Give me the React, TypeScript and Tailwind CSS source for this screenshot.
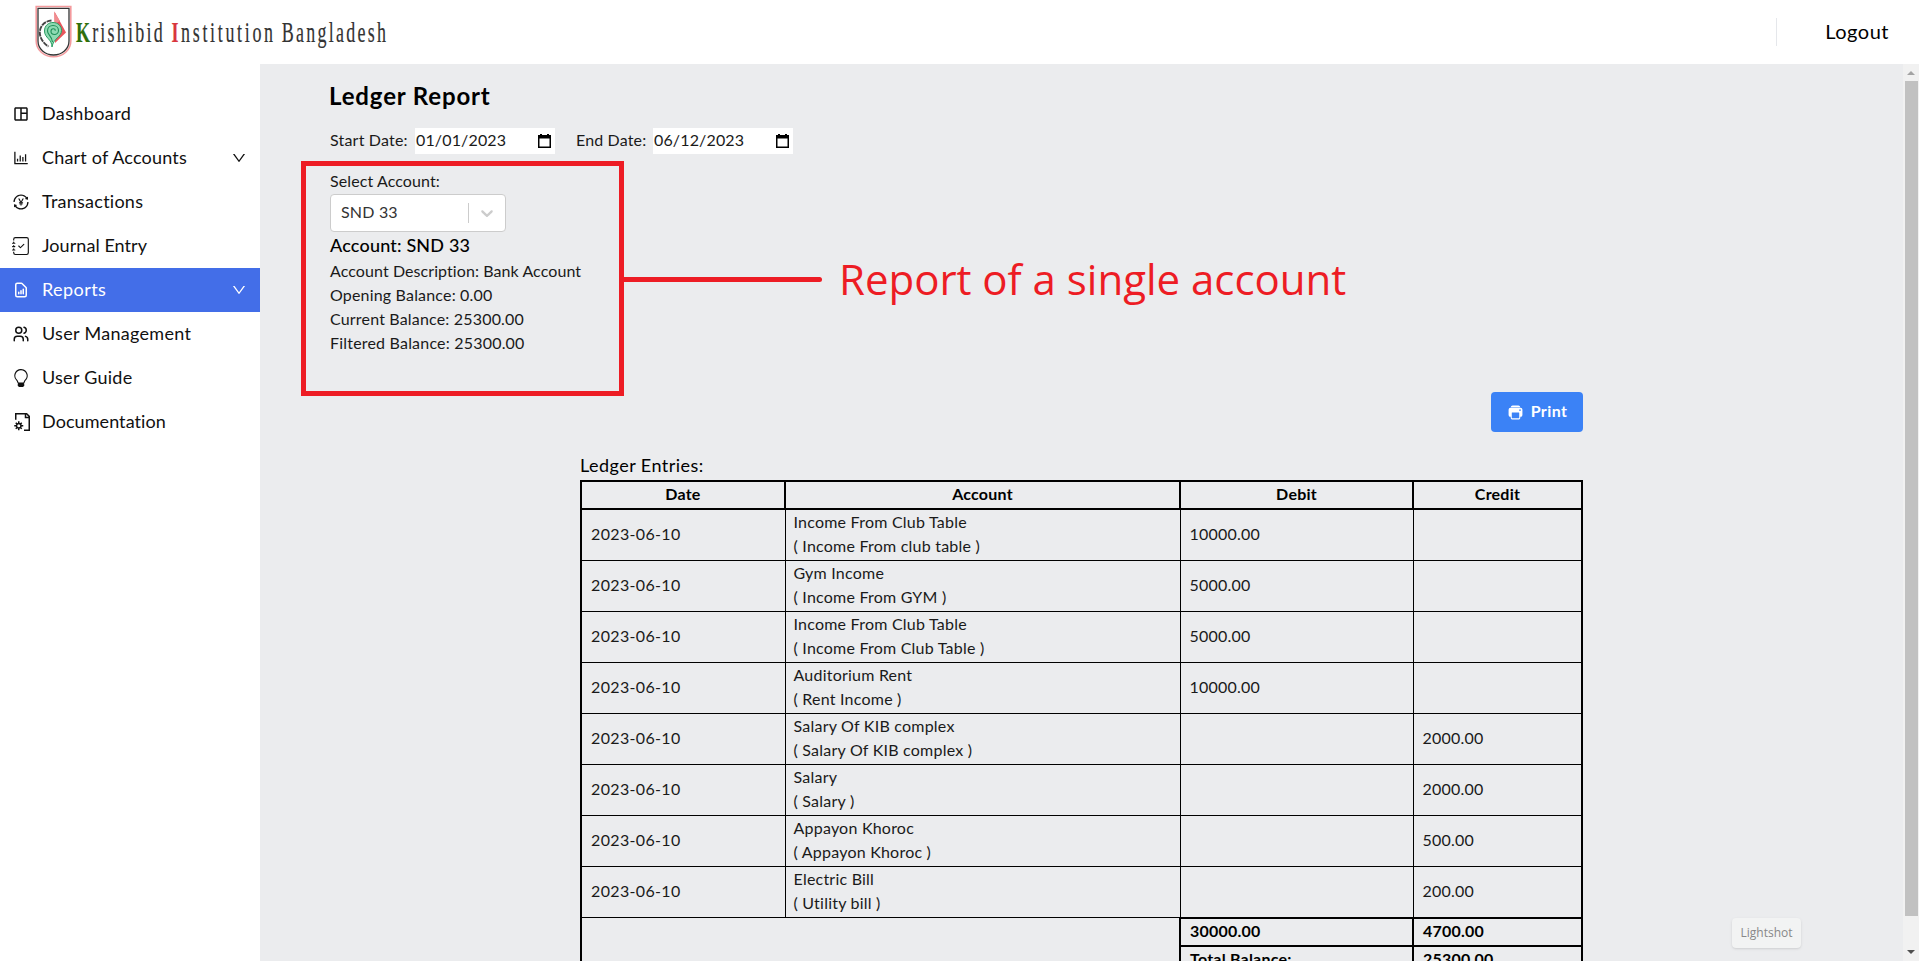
import { AiOutlineBarChart, AiOutlineDown, AiOutlineTransaction } from "react-icons/ai";
import { BsJournalCheck, BsLightbulb } from "react-icons/bs";
import { GrDocumentConfig } from "react-icons/gr";
import { HiOutlineDocumentReport } from "react-icons/hi";
import { IoPrint } from "react-icons/io5";
import { MdOutlineSpaceDashboard } from "react-icons/md";
import { TbUsers } from "react-icons/tb";

const navItems = [
  { label: "Dashboard", icon: MdOutlineSpaceDashboard, tracking: "tracking-[0.38px]" },
  { label: "Chart of Accounts", icon: AiOutlineBarChart, tracking: "tracking-[0.18px]", expandable: true },
  { label: "Transactions", icon: AiOutlineTransaction, tracking: "tracking-[0.25px]" },
  { label: "Journal Entry", icon: BsJournalCheck, tracking: "tracking-[0.06px]" },
  { label: "Reports", icon: HiOutlineDocumentReport, tracking: "tracking-[0.42px]", expandable: true, active: true },
  { label: "User Management", icon: TbUsers, tracking: "tracking-[0.3px]" },
  { label: "User Guide", icon: BsLightbulb, tracking: "tracking-[0.26px]" },
  { label: "Documentation", icon: GrDocumentConfig, tracking: "tracking-[0.07px]" },
];

const entries = [
  { name: "Income From Club Table", note: "Income From club table", debit: "10000.00", credit: "" },
  { name: "Gym Income", note: "Income From GYM", debit: "5000.00", credit: "" },
  { name: "Income From Club Table", note: "Income From Club Table", debit: "5000.00", credit: "" },
  { name: "Auditorium Rent", note: "Rent Income", debit: "10000.00", credit: "" },
  { name: "Salary Of KIB complex", note: "Salary Of KIB complex", debit: "", credit: "2000.00" },
  { name: "Salary", note: "Salary", debit: "", credit: "2000.00" },
  { name: "Appayon Khoroc", note: "Appayon Khoroc", debit: "", credit: "500.00" },
  { name: "Electric Bill", note: "Utility bill", debit: "", credit: "200.00" },
];

function Logo() {
  return (
    <svg width="356" height="56" viewBox="0 0 356 56" className="block">
      <path d="M1.2 2.5H35.8V37C35.8 46 28 52.8 18.5 52.8S1.2 46 1.2 37Z" fill="#fff" stroke="#f49a9d" strokeWidth="1.6" />
      <path d="M3 4.3H34V37C34 45 27 51 18.5 51S3 45 3 37Z" fill="#fff" stroke="#333" strokeWidth="1.3" />
      <path d="M19.5 7.5L31 28.5L20 39Z" fill="#e8555c" />
      <path d="M19 7.5L25 17L19.5 20Z" fill="#f08d90" />
      <path d="M17 43C17 35 9.5 34 9.5 27C9.5 21.5 13.5 18.5 18 18.5C23 18.5 26.5 22 26.5 26.5C26.5 33 18.5 34 17 43Z" fill="#8fdab2" stroke="#2a9d63" strokeWidth="1" />
      <path d="M17.5 38C17 32 12.5 31 12.5 27C12.5 23.5 15 21.5 18 21.5C21.5 21.5 23.5 24 23.5 26.5C23.5 29 21.5 30.5 19.5 30.5C17.5 30.5 16 29 16 27.3C16 25.8 17 24.8 18.3 24.8C19.5 24.8 20.3 25.7 20.3 26.7" fill="none" stroke="#1f8f58" strokeWidth="1.1" />
      <path d="M16.5 16.5C9 17 4.8 23 4.8 28.5C4.8 34 8.500 39.500 13.500 42.500" fill="none" stroke="#444" strokeWidth="1.9" strokeDasharray="5 0.8" />
      <g fontFamily="'Liberation Serif', serif" fontSize="29" fill="#333" stroke="#333" strokeWidth="0.2" transform="scale(0.62 1)">
        <text x="66" y="38" textLength="140">
          <tspan fill="#2f6f0a" stroke="#2f6f0a" fontWeight="700">K</tspan>rishibid
        </text>
        <text x="220" y="38" textLength="164">
          <tspan fill="#d9363e" stroke="#d9363e" fontWeight="700">I</tspan>nstitution
        </text>
        <text x="398" y="38" textLength="168">Bangladesh</text>
      </g>
    </svg>
  );
}

function CalendarIcon() {
  return (
    <svg width="13" height="14" viewBox="0 0 13 14" className="block">
      <path d="M2 0H4V1H9V0H11V1H13V14H0V1H2ZM1.5 4.5V12.5H11.5V4.5Z" fill="#000" fillRule="evenodd" />
    </svg>
  );
}

function DateField({ label, value, labelClass }: { label: string; value: string; labelClass: string }) {
  return (
    <label className="flex items-center">
      <span className={labelClass}>{label}</span>
      <span className="ml-2 flex h-[26px] w-[140px] items-center justify-between bg-white pl-[1px] pr-1">
        <span className="pb-[2px] tracking-[0.15px]">{value}</span>
        <CalendarIcon />
      </span>
    </label>
  );
}

const cell = "border border-black px-2 pt-0 pb-[2px]";
const amountCell = "border border-black pl-[9px] pr-2 pt-0 pb-[2px]";
const totalCell = "border-2 border-black pl-[9px] pr-2 pt-0 pb-[1px]";

export default function App() {
  return (
    <div className="relative flex h-[961px] w-[1919px] flex-col overflow-hidden bg-white font-['Lato',sans-serif] text-black">
      <header className="flex h-16 shrink-0 items-center justify-between pl-[35px] pr-[30px]">
        <Logo />
        <div className="flex items-center">
          <div className="h-7 w-px bg-gray-200" />
          <span className="ml-12 pb-[3px] text-xl tracking-[0.5px]">Logout</span>
        </div>
      </header>

      <div className="flex min-h-0 flex-1">
        <nav className="w-[260px] shrink-0 pt-7">
          {navItems.map(({ label, icon: Icon, tracking, expandable, active }) => (
            <div key={label} className={active ? "flex h-11 items-center bg-[#436ee8] pl-3 pr-[13px] text-white" : "flex h-11 items-center pl-3 pr-[13px] text-[#111]"}>
              <Icon size={18} />
              <span className={`ml-3 flex-1 pb-[2px] text-lg ${tracking}`}>{label}</span>
              {expandable && <AiOutlineDown size={16} />}
            </div>
          ))}
        </nav>

        <main className="flex-1 bg-[#ebecee] pl-[70px] pt-4 text-[#1a1a1a]">
          <h1 className="-ml-px text-2xl leading-8 font-bold tracking-[0.85px] text-black">Ledger Report</h1>
          <div className="mt-4 flex gap-[21px]">
            <DateField label="Start Date:" value="01/01/2023" labelClass="w-[77px] whitespace-nowrap pb-[2px] tracking-[0.2px]" />
            <DateField label="End Date:" value="06/12/2023" labelClass="w-[69px] whitespace-nowrap pb-[2px] tracking-[0.15px]" />
          </div>
          <div className="mt-[15px] leading-6 tracking-[0.18px]">
            <p className="mb-px tracking-[0.1px]">Select Account:</p>
            <div className="flex h-[38px] w-44 items-center rounded border border-[#ccc] bg-white">
              <span className="flex-1 pb-[2px] pl-[10px] text-[#333]">SND 33</span>
              <span className="h-5 w-px bg-[#ccc]" />
              <svg width="20" height="20" viewBox="0 0 20 20" fill="#ccc" className="mx-2">
                <path d="M4.516 7.548c0.436-0.446 1.043-0.481 1.576 0l3.908 3.747 3.908-3.747c0.533-0.481 1.141-0.446 1.574 0 0.436 0.445 0.408 1.197 0 1.615-0.406 0.418-4.695 4.502-4.695 4.502-0.217 0.223-0.502 0.335-0.787 0.335s-0.570-0.112-0.789-0.335c0 0-4.287-4.084-4.695-4.502s-0.436-1.170 0-1.615z" />
              </svg>
            </div>
            <h2 className="-mt-px text-lg leading-7 font-medium text-black">Account: SND 33</h2>
            <p className="tracking-[0.08px]">Account Description: Bank Account</p>
            <p>Opening Balance: 0.00</p>
            <p>Current Balance: 25300.00</p>
            <p className="tracking-[0.2px]">Filtered Balance: 25300.00</p>
          </div>

          <div className="ml-[250px] mt-[37px] w-[1003px]">
            <div className="flex justify-end">
              <button className="flex h-10 w-[92px] items-center justify-center gap-[7px] rounded bg-[#3b82f6] font-bold text-white">
                <IoPrint size={17} />
                <span className="pb-[2px] tracking-[0.4px]">Print</span>
              </button>
            </div>
            <h3 className="mt-[19px] mb-px text-lg leading-7 tracking-[0.45px] text-black">Ledger Entries:</h3>
            <table className="w-[1003px] table-fixed border-collapse border-2 border-black leading-6 tracking-[0.22px]">
              <colgroup>
                <col className="w-[204px]" />
                <col className="w-[395px]" />
                <col className="w-[233px]" />
                <col className="w-[169px]" />
              </colgroup>
              <thead>
                <tr className="h-7 text-black">
                  {["Date", "Account", "Debit", "Credit"].map((h) => (
                    <th key={h} className="border-2 border-black px-0 pt-0 pb-[2px] font-bold">{h}</th>
                  ))}
                </tr>
              </thead>
              <tbody>
                {entries.map((e, i) => (
                  <tr key={i} className="h-[51px]">
                    <td className="border border-black pl-[9px] pr-2 pt-0 pb-[2px] tracking-[0.35px]">2023-06-10</td>
                    <td className={cell}>
                      <p>{e.name}</p>
                      <p>( {e.note} )</p>
                    </td>
                    <td className={amountCell}>{e.debit}</td>
                    <td className={amountCell}>{e.credit}</td>
                  </tr>
                ))}
                <tr className="h-7 font-bold text-black">
                  <td colSpan={2} rowSpan={2} />
                  <td className={totalCell}>30000.00</td>
                  <td className={totalCell}>4700.00</td>
                </tr>
                <tr className="h-7 font-bold text-black">
                  <td className={totalCell}>Total Balance:</td>
                  <td className={totalCell}>25300.00</td>
                </tr>
              </tbody>
            </table>
          </div>
        </main>

        <div className="flex w-4 shrink-0 flex-col items-center bg-[#f1f1f1]">
          <svg width="16" height="17" viewBox="0 0 16 17"><path d="M4 11L8 7L12 11Z" fill="#a3a3a3" /></svg>
          <div className="w-[13px] flex-1 bg-[#c1c1c1]" />
          <svg width="16" height="45" viewBox="0 0 16 45"><path d="M4 34L8 38L12 34Z" fill="#505050" /></svg>
        </div>
      </div>

      <div className="absolute left-[301px] top-[161px] h-[235px] w-[323px] border-[5px] border-[#ed1c24]" />
      <div className="absolute left-[624px] top-[277px] h-[5px] w-[198px] rounded-r-sm bg-[#ed1c24]" />
      <div className="absolute left-[839px] top-[249px] whitespace-nowrap font-['Open_Sans',sans-serif] text-[42px] leading-[60px] tracking-[-0.02px] text-[#ed1c24]">
        Report of a single account
      </div>
      <div className="absolute left-[1732px] top-[918px] flex h-[30px] w-[69px] items-center justify-center rounded-sm bg-[#f2f3f3] font-['Open_Sans',sans-serif] text-xs text-[#888] shadow">
        Lightshot
      </div>
    </div>
  );
}
